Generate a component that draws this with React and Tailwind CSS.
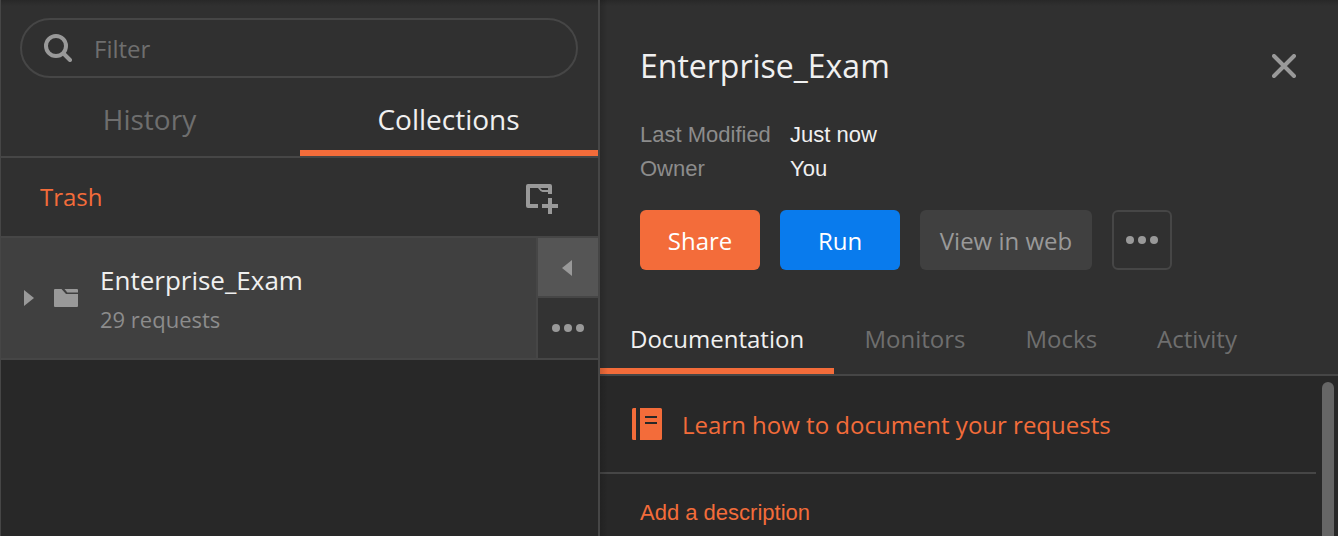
function Dots({ className }) {
  return (
    <svg className={className} width="32" height="8" viewBox="0 0 32 8" fill="#999999">
      <circle cx="4" cy="4" r="4" />
      <circle cx="16" cy="4" r="4" />
      <circle cx="28" cy="4" r="4" />
    </svg>
  );
}

function SearchIcon() {
  return (
    <svg width="28" height="28" viewBox="0 0 28 28" fill="none" stroke="#999999" strokeWidth="4">
      <circle cx="12" cy="12" r="10" />
      <path d="M19.5 19.5L26 26" strokeLinecap="round" />
    </svg>
  );
}

function NewCollectionIcon() {
  return (
    <svg width="32" height="30" viewBox="0 0 32 30" fill="#999999">
      <path d="M2 0H24a2 2 0 0 1 2 2V10H22V8H16.5L14.5 7L12 4H4V20H12V24H2a2 2 0 0 1-2-2V2a2 2 0 0 1 2-2Z" />
      <path d="M14.2 4H22V6H16Z" fill="#303030" />
      <path d="M22 14h4v6h6v4h-6v6h-4v-6h-6v-4h6z" />
    </svg>
  );
}

function FolderIcon() {
  return (
    <svg width="24" height="18" viewBox="0 0 24 18" fill="#999999">
      <path d="M1 0H7.5L12 5H24V17a1 1 0 0 1-1 1H1a1 1 0 0 1-1-1V1a1 1 0 0 1 1-1Z" />
      <path d="M10.5 0H23a1 1 0 0 1 1 1V3.4H13.3Z" />
    </svg>
  );
}

function Sidebar() {
  return (
    <aside className="flex h-full w-[600px] shrink-0 flex-col border-r-2 border-l border-r-[#464646] border-l-[#464646] bg-[#282828]">
      <div className="flex h-[158px] shrink-0 flex-col border-b-2 border-[#464646] bg-[#303030] bg-linear-to-b from-[#282828] to-[#303030] to-[6px] pt-[18px]">
        <div className="mr-5 ml-[19px] flex h-15 shrink-0 items-center gap-[22px] rounded-full border-2 border-[#464646] pl-[22px]">
          <SearchIcon />
          <span className="pt-px text-[24px] leading-8 text-[#6e6e6e]">Filter</span>
        </div>
        <div className="flex h-[78px] shrink-0 text-[28px] leading-9">
          <div className="w-[299px] pt-[23px] pr-0.5 text-center text-[#6e6e6e]">History</div>
          <div className="flex-1 border-b-6 border-[#f36c3a] pt-[23px] pr-px text-center text-[#f0f0f0]">Collections</div>
        </div>
      </div>
      <div className="flex h-[78px] shrink-0 items-center justify-between bg-[#303030] pr-10 pl-[39px]">
        <span className="pb-px text-[24px] leading-8 text-[#f36c3a]">Trash</span>
        <div className="pt-[3px]"><NewCollectionIcon /></div>
      </div>
      <div className="flex h-[124px] shrink-0 border-y-2 border-[#464646] bg-[#404040]">
        <div className="flex flex-1 items-center pl-[23px]">
          <svg width="10" height="16" viewBox="0 0 10 16" fill="#999999"><path d="M0 0L10 8L0 16z" /></svg>
          <div className="ml-5"><FolderIcon /></div>
          <div className="ml-[22px] flex flex-col pt-0.5">
            <span className="text-[26px] leading-10 text-[#f0f0f0]">Enterprise_Exam</span>
            <span className="text-[22px] leading-[38px] text-[#8c8c8c]">29 requests</span>
          </div>
        </div>
        <div className="flex w-[62px] flex-col border-l-2 border-[#464646]">
          <div className="flex h-15 items-center justify-center border-b-2 border-[#464646] bg-[#555555] pr-0.5">
            <svg width="10" height="16" viewBox="0 0 10 16" fill="#999999" className="mt-0.5"><path d="M10 0L0 8L10 16z" /></svg>
          </div>
          <div className="flex flex-1 items-center justify-center bg-[#333333]"><Dots /></div>
        </div>
      </div>
    </aside>
  );
}

function Details() {
  return (
    <main className="relative flex h-full min-w-0 flex-1 flex-col bg-[#282828]">
      <header className="flex h-[376px] shrink-0 flex-col border-b-2 border-[#464646] bg-[#303030] bg-linear-to-b from-[#282828] to-[#303030] to-[6px]">
        <div className="flex h-[118px] items-start justify-between pt-[46px] pr-[42px] pl-10">
          <h1 className="text-[32px] leading-10 text-[#f0f0f0]">Enterprise_Exam</h1>
          <svg className="mt-2" width="24" height="24" viewBox="0 0 24 24" stroke="#999999" strokeWidth="4" strokeLinecap="round">
            <path d="M2 2L22 22M22 2L2 22" />
          </svg>
        </div>
        <dl className="grid grid-cols-[150px_auto] pl-10 font-['Liberation_Sans',Arial,sans-serif] text-[22px] leading-[34px]">
          <dt className="text-[#8c8c8c]">Last Modified</dt>
          <dd className="text-[#f0f0f0]">Just now</dd>
          <dt className="text-[#8c8c8c]">Owner</dt>
          <dd className="text-[#f0f0f0]">You</dd>
        </dl>
        <div className="mt-6 flex gap-5 pl-10 text-[24px] leading-8">
          <button className="h-15 w-30 rounded-md bg-[#f36c3a] pt-px text-white">Share</button>
          <button className="h-15 w-30 rounded-md bg-[#097bed] pt-px text-white">Run</button>
          <button className="h-15 w-[172px] rounded-md bg-[#404040] pt-px whitespace-nowrap text-[#999999]">View in web</button>
          <button className="flex h-15 w-15 items-center justify-center rounded-md border-2 border-[#464646]"><Dots /></button>
        </div>
        <nav className="mt-auto flex h-[72px] text-[24px] leading-8 text-[#6e6e6e]">
          <span className="w-[234px] border-b-6 border-[#f36c3a] pt-[21px] pl-[30px] text-[#f0f0f0]">Documentation</span>
          <span className="w-[161px] pt-[21px] pl-[30.5px]">Monitors</span>
          <span className="w-[132px] pt-[21px] pl-[30.5px]">Mocks</span>
          <span className="pt-[21px] pl-[30px]">Activity</span>
        </nav>
      </header>
      <div className="flex min-h-0 flex-1">
        <div className="flex flex-1 flex-col">
          <a className="flex h-[98px] shrink-0 items-center border-b-2 border-[#464646] pl-8 text-[#f36c3a]">
            <svg width="30" height="32" viewBox="0 0 30 32" fill="currentColor">
              <path d="M1.5 0H4V32H1.5A1.5 1.5 0 0 1 0 30.5V1.5A1.5 1.5 0 0 1 1.5 0Z" />
              <path fillRule="evenodd" d="M8 0H28.5A1.5 1.5 0 0 1 30 1.5V30.5A1.5 1.5 0 0 1 28.5 32H8ZM13 8V10H25V8ZM13 14V16H25V14Z" />
            </svg>
            <span className="pt-px pl-5 text-[24px] leading-8">Learn how to document your requests</span>
          </a>
          <a className="pt-[23px] pl-10 font-['Liberation_Sans',Arial,sans-serif] text-[22px] leading-8 text-[#f36c3a]">Add a description</a>
        </div>
        <div className="flex w-[22px] pt-1.5 pl-1.5">
          <div className="w-3 rounded-t-full bg-[#666666]" />
        </div>
      </div>
      <div className="pointer-events-none absolute inset-y-0 left-0 w-2 bg-linear-to-r from-black/15 to-transparent" />
    </main>
  );
}

export default function App() {
  return (
    <div className="flex h-[536px] w-[1338px] overflow-hidden font-['Open_Sans','Noto_Sans',sans-serif]">
      <Sidebar />
      <Details />
    </div>
  );
}
